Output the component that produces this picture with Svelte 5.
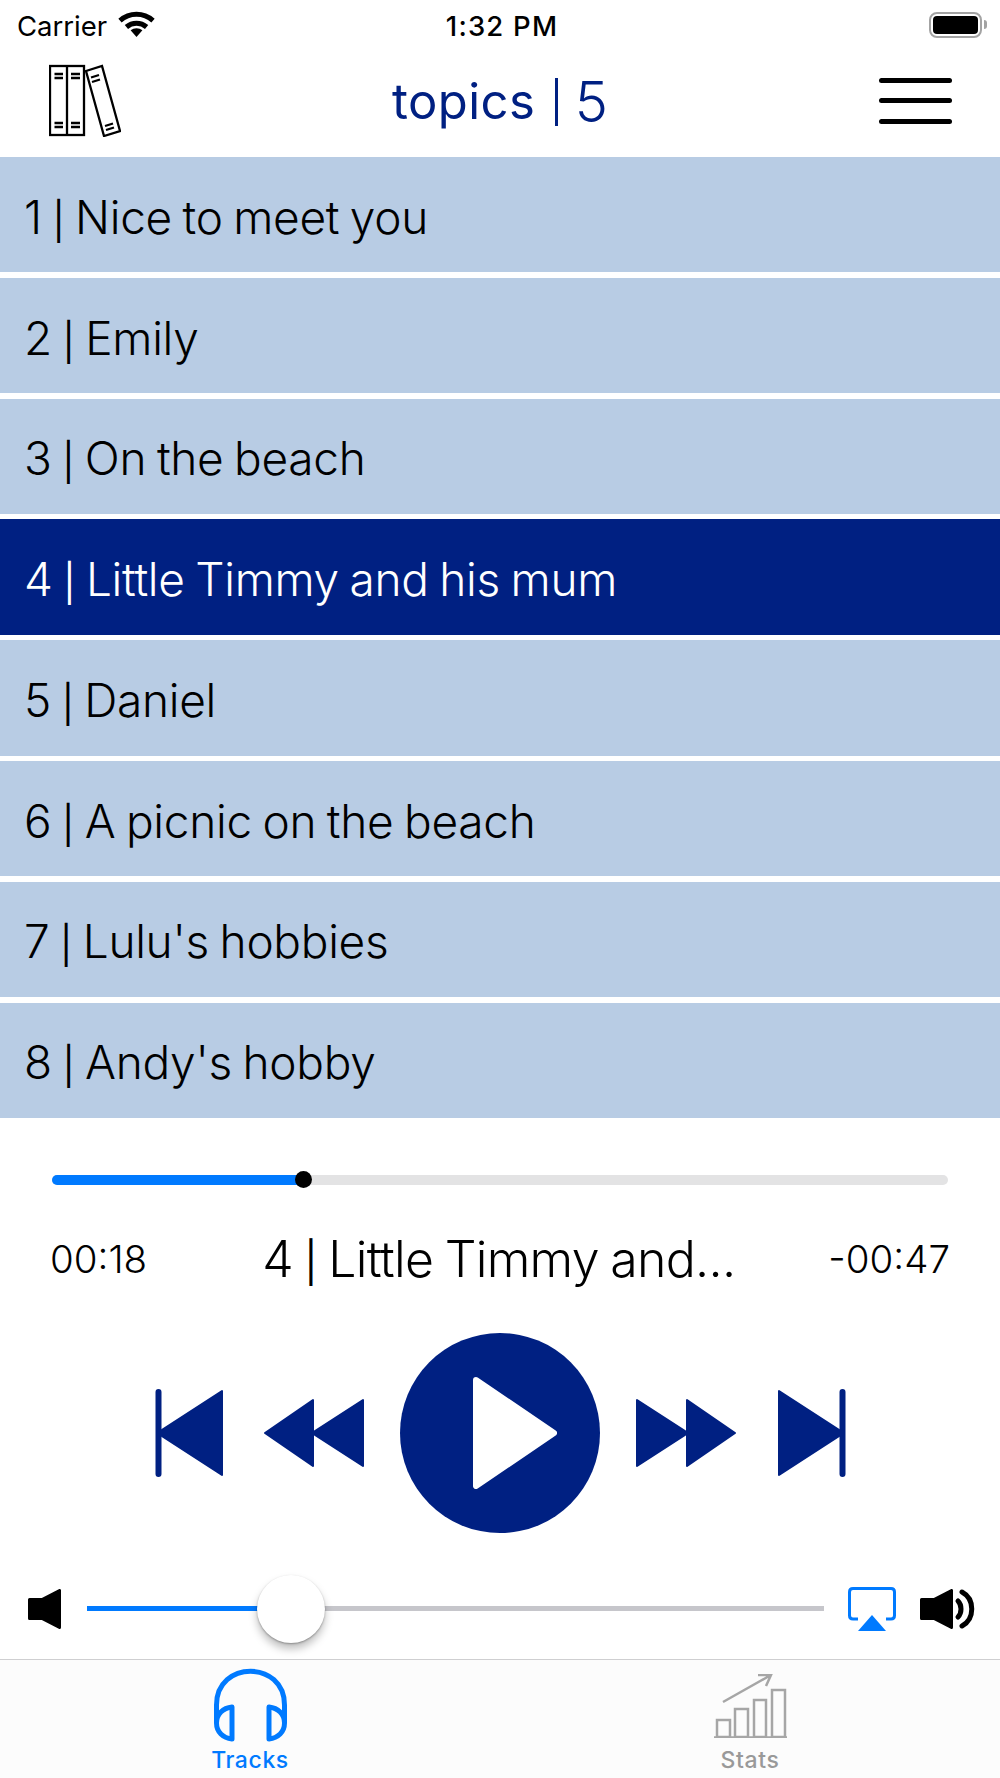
<script>
  const tracks = [
    "Nice to meet you",
    "Emily",
    "On the beach",
    "Little Timmy and his mum",
    "Daniel",
    "A picnic on the beach",
    "Lulu's hobbies",
    "Andy's hobby"
  ];
  const active = 3;
  const progress = 28.05;
  const volume = 27.68;
</script>

<div class="screen">
  <div class="status">
    <div class="carrier">
      <span>Carrier</span>
      <svg class="wifi" viewBox="0 0 37 26">
        <path d="M18.5 26 L12.6 19.3 C16 16.4 21 16.4 24.4 19.3 Z" />
        <path d="M2 9.6 C11.5 1.2 25.5 1.2 35 9.6" class="wave" />
        <path d="M8.4 16 C14.2 11 22.8 11 28.6 16" class="wave" />
      </svg>
    </div>
    <div class="clock">1:32 PM</div>
    <div class="battery-wrap">
      <div class="battery"><div class="charge"></div></div>
      <div class="nub"></div>
    </div>
  </div>

  <div class="nav">
    <svg class="books" viewBox="0 0 72 73">
      <rect x="1" y="2" width="34" height="69" />
      <line x1="18" y1="2" x2="18" y2="71" />
      <path d="M5.5 10 H14 M5.5 14 H14 M22 10 H31 M22 14 H31 M5.5 59 H14 M5.5 63 H14 M22 59 H31 M22 63 H31" />
      <path d="M37 7 L53 2 L71 67 L55 72 Z" />
      <path d="M42 13.5 L50 11 M43 18 L51 15.5 M56 62 L64 59.5 M57 66 L65 63.5" />
    </svg>
    <div class="logo">
      <span class="word">topics</span>
      <span class="bar"></span>
      <span class="num">5</span>
    </div>
    <div class="burger"><i></i><i></i><i></i></div>
  </div>

  <div class="list">
    {#each tracks as t, i}
      <div class="row" class:on={i === active}>
        <span>{i + 1} <span class="pipe">|</span> {t}</span>
      </div>
    {/each}
  </div>

  <div class="player">
    <div class="progress">
      <div class="fill" style="width: {progress}%"></div>
      <div class="dot" style="left: {progress}%"></div>
    </div>

    <div class="info">
      <span class="time">00:18</span>
      <span class="title">4 <span class="pipe2">|</span> Little Timmy and...</span>
      <span class="time">-00:47</span>
    </div>

    <div class="controls">
      <svg class="skip" viewBox="0 0 70 88">
        <rect x="2.500" y="1" width="4" height="86" rx="2" />
        <path d="M68 2 V86 L7 46.5 V41.5 Z" />
      </svg>
      <svg class="seek" viewBox="0 0 100 70">
        <path d="M49 2 V68 L1 35 Z" />
        <path d="M99 2 V68 L51 37 V33 Z" />
      </svg>
      <div class="play">
        <svg viewBox="0 0 84 112">
          <path d="M3 3 L81 56 L3 109 Z" />
        </svg>
      </div>
      <svg class="seek flip" viewBox="0 0 100 70">
        <path d="M49 2 V68 L1 35 Z" />
        <path d="M99 2 V68 L51 37 V33 Z" />
      </svg>
      <svg class="skip flip" viewBox="0 0 70 88">
        <rect x="2.500" y="1" width="4" height="86" rx="2" />
        <path d="M68 2 V86 L7 46.5 V41.5 Z" />
      </svg>
    </div>

    <div class="volume">
      <svg class="spk-low" viewBox="0 0 33 40">
        <path d="M1.500 10.500 H14 L31.500 1.500 V38.500 L14 29.500 H1.500 Z" />
      </svg>
      <div class="vtrack">
        <div class="vfill" style="width: {volume}%"></div>
        <div class="knob" style="left: {volume}%"></div>
      </div>
      <svg class="airplay" viewBox="0 0 48 44">
        <path class="screen-line" d="M10 32 H5 Q1.500 32 1.500 28.500 V5 Q1.500 1.500 5 1.500 H43 Q46.500 1.500 46.500 5 V28.500 Q46.500 32 43 32 H38" />
        <path d="M24 28 L38 44 H10 Z" />
      </svg>
      <svg class="spk-high" viewBox="0 0 56 40">
        <path d="M1.500 10.500 H14 L31.500 1.500 V38.500 L14 29.500 H1.500 Z" />
        <path class="wave2" d="M38 12 C42 16 42 24 38 28" />
        <path class="wave2" d="M42 3 C55 10 55 30 42 37" />
      </svg>
    </div>
  </div>

  <div class="tabbar">
    <div class="tab blue">
      <svg class="phones" viewBox="0 0 73 72">
        <path d="M2.500 54 V36 C2.500 -9 70.500 -9 70.500 36 V54" />
        <path d="M18 38 V70 C9 69 2.500 63 2.500 54 C2.500 45 9 39 18 38 Z" />
        <path d="M55 38 V70 C64 69 70.500 63 70.500 54 C70.500 45 64 39 55 38 Z" />
      </svg>
      <span>Tracks</span>
    </div>
    <div class="tab grey">
      <svg class="stats" viewBox="0 0 73 64">
        <path d="M0 63.500 H73" />
        <rect x="3" y="46" width="13" height="17" />
        <rect x="21" y="35" width="13" height="28" />
        <rect x="40" y="26" width="12" height="37" />
        <rect x="58" y="16" width="13" height="47" />
        <path d="M9 28 L57 1 M44 1 L57 1 L52 12" />
      </svg>
      <span>Stats</span>
    </div>
  </div>
</div>

<style>
  :global(body) {
    background: #fff;
  }

  .screen {
    width: 1000px;
    height: 1778px;
    display: flex;
    flex-direction: column;
    font-family: Inter, "Liberation Sans", sans-serif;
    color: #000;
    overflow: hidden;
  }

  /* status bar */
  .status {
    height: 50px;
    padding: 1px 13px 0 17px;
    box-sizing: border-box;
    display: grid;
    grid-template-columns: 1fr auto 1fr;
    align-items: center;
    font-size: 27.500px;
    flex: none;
  }
  .carrier {
    display: flex;
    align-items: center;
    gap: 11px;
  }
  .wifi {
    width: 37px;
    height: 26px;
    margin-top: -3px;
  }
  .wave {
    fill: none;
    stroke: #000;
    stroke-width: 5;
  }
  .clock {
    font-weight: 500;
    letter-spacing: 1.2px;
  }
  .battery-wrap {
    display: flex;
    align-items: center;
    justify-content: flex-end;
    gap: 2px;
    margin-top: -2px;
  }
  .battery {
    width: 53px;
    height: 26px;
    box-sizing: border-box;
    border: 2px solid #a3a3a3;
    border-radius: 8px;
    padding: 2px;
  }
  .charge {
    height: 100%;
    background: #000;
    border-radius: 4px;
  }
  .nub {
    width: 3px;
    height: 9px;
    background: #a3a3a3;
    border-radius: 0 3px 3px 0;
  }

  /* nav */
  .nav {
    height: 107px;
    flex: none;
    padding: 0 48px 6px 49px;
    display: flex;
    align-items: center;
    justify-content: space-between;
    box-sizing: border-box;
  }
  .books {
    width: 72px;
    height: 73px;
    fill: none;
    stroke: #000;
    stroke-width: 2.300;
  }
  .logo {
    display: flex;
    align-items: center;
    color: #002082;
    height: 60px;
    margin-top: 2px;
  }
  .word {
    font-size: 49px;
    font-weight: 400;
    letter-spacing: 0.4px;
    line-height: 60px;
  }
  .bar {
    width: 2.500px;
    height: 48px;
    background: #002082;
    margin: 0 17px 0 20px;
  }
  .num {
    font-size: 56px;
    line-height: 60px;
    font-weight: 300;
  }
  .burger {
    width: 73px;
    display: flex;
    flex-direction: column;
    gap: 15.500px;
  }
  .burger i {
    display: block;
    height: 5px;
    background: #000;
    border-radius: 3px;
  }

  /* list */
  .list {
    height: 961px;
    flex: none;
    display: grid;
    grid-auto-rows: 1fr;
    gap: 5.300px;
  }
  .row {
    background: #b8cce4;
    padding: 4px 0 0 24px;
    display: flex;
    align-items: center;
    font-size: 46px;
    font-weight: 300;
    letter-spacing: -0.3px;
    word-spacing: -2px;
  }
  .row.on {
    background: #002082;
    color: #fff;
  }
  .pipe {
    font-size: 37px;
    font-weight: 400;
  }

  /* player */
  .player {
    flex: 1;
    display: flex;
    flex-direction: column;
  }
  .progress {
    position: relative;
    margin: 57px 52px 0;
    height: 9.500px;
    background: #e3e3e4;
    border-radius: 5px;
  }
  .fill {
    height: 100%;
    background: #007aff;
    border-radius: 5px 0 0 5px;
  }
  .dot {
    position: absolute;
    top: 50%;
    width: 17px;
    height: 17px;
    margin: -8.500px 0 0 -8.500px;
    background: #000;
    border-radius: 50%;
  }
  .info {
    margin: 32px 50px 0 50px;
    height: 84px;
    display: flex;
    align-items: center;
    justify-content: space-between;
  }
  .time {
    font-size: 38.500px;
    font-weight: 300;
  }
  .title {
    margin-left: 22px;
    font-size: 50px;
    font-weight: 300;
    letter-spacing: -0.7px;
    word-spacing: -2px;
  }
  .pipe2 {
    font-size: 40px;
    font-weight: 400;
  }
  .controls {
    margin-top: 32px;
    height: 200px;
    display: flex;
    align-items: center;
    justify-content: center;
    gap: 36px;
  }
  .skip {
    width: 70px;
    height: 88px;
    margin: 0 4.500px;
    fill: #002082;
    stroke: #002082;
    stroke-width: 2;
    stroke-linejoin: round;
  }
  .seek {
    width: 100px;
    height: 70px;
    fill: #002082;
    stroke: #002082;
    stroke-width: 2;
    stroke-linejoin: round;
  }
  .flip {
    transform: scaleX(-1);
  }
  .play {
    width: 200px;
    height: 200px;
    border-radius: 50%;
    background: #002082;
    display: flex;
    align-items: center;
    justify-content: center;
  }
  .play svg {
    width: 84px;
    height: 112px;
    margin-left: 29px;
    fill: #fff;
    stroke: #fff;
    stroke-width: 6;
    stroke-linejoin: round;
  }

  .volume {
    margin-top: 42px;
    height: 68px;
    padding: 0 24px 0 28px;
    display: flex;
    align-items: center;
  }
  .spk-low {
    width: 33px;
    height: 40px;
    flex: none;
    fill: #000;
    stroke: #000;
    stroke-width: 3;
    stroke-linejoin: round;
  }
  .vtrack {
    position: relative;
    flex: 1;
    height: 5px;
    margin: 0 24px 0 26px;
    background: #c6c6cb;
  }
  .vfill {
    height: 100%;
    background: #007aff;
  }
  .knob {
    position: absolute;
    top: 50%;
    width: 68px;
    height: 68px;
    margin: -34px 0 0 -34px;
    background: #fff;
    border-radius: 50%;
    box-shadow: 0 6px 8px rgba(0, 0, 0, 0.25), 0 1px 2px rgba(0, 0, 0, 0.3);
  }
  .airplay {
    width: 48px;
    height: 44px;
    flex: none;
    margin-right: 24px;
    fill: #007aff;
  }
  .screen-line {
    fill: none;
    stroke: #007aff;
    stroke-width: 3;
  }
  .spk-high {
    width: 56px;
    height: 40px;
    flex: none;
    fill: #000;
    stroke: #000;
    stroke-width: 3;
    stroke-linejoin: round;
  }
  .wave2 {
    fill: none;
    stroke-width: 5;
    stroke-linecap: round;
  }

  /* tab bar */
  .tabbar {
    height: 119px;
    flex: none;
    box-sizing: border-box;
    border-top: 1px solid #cfcfd1;
    background: #fcfcfc;
    display: grid;
    grid-template-columns: 1fr 1fr;
  }
  .tab {
    display: flex;
    flex-direction: column;
    align-items: center;
    font-size: 23px;
    font-weight: 500;
    letter-spacing: 0.6px;
  }
  .tab span {
    line-height: 28px;
    margin-top: 5px;
  }
  .blue {
    color: #007aff;
  }
  .grey {
    color: #999;
  }
  .phones {
    width: 73px;
    height: 72px;
    margin-top: 9px;
    fill: none;
    stroke: #007aff;
    stroke-width: 5;
    stroke-linejoin: round;
    overflow: visible;
  }
  .stats {
    width: 73px;
    height: 64px;
    margin-top: 14px;
    margin-bottom: 3px;
    fill: none;
    stroke: #a6a6a6;
    stroke-width: 2.500;
  }
</style>
